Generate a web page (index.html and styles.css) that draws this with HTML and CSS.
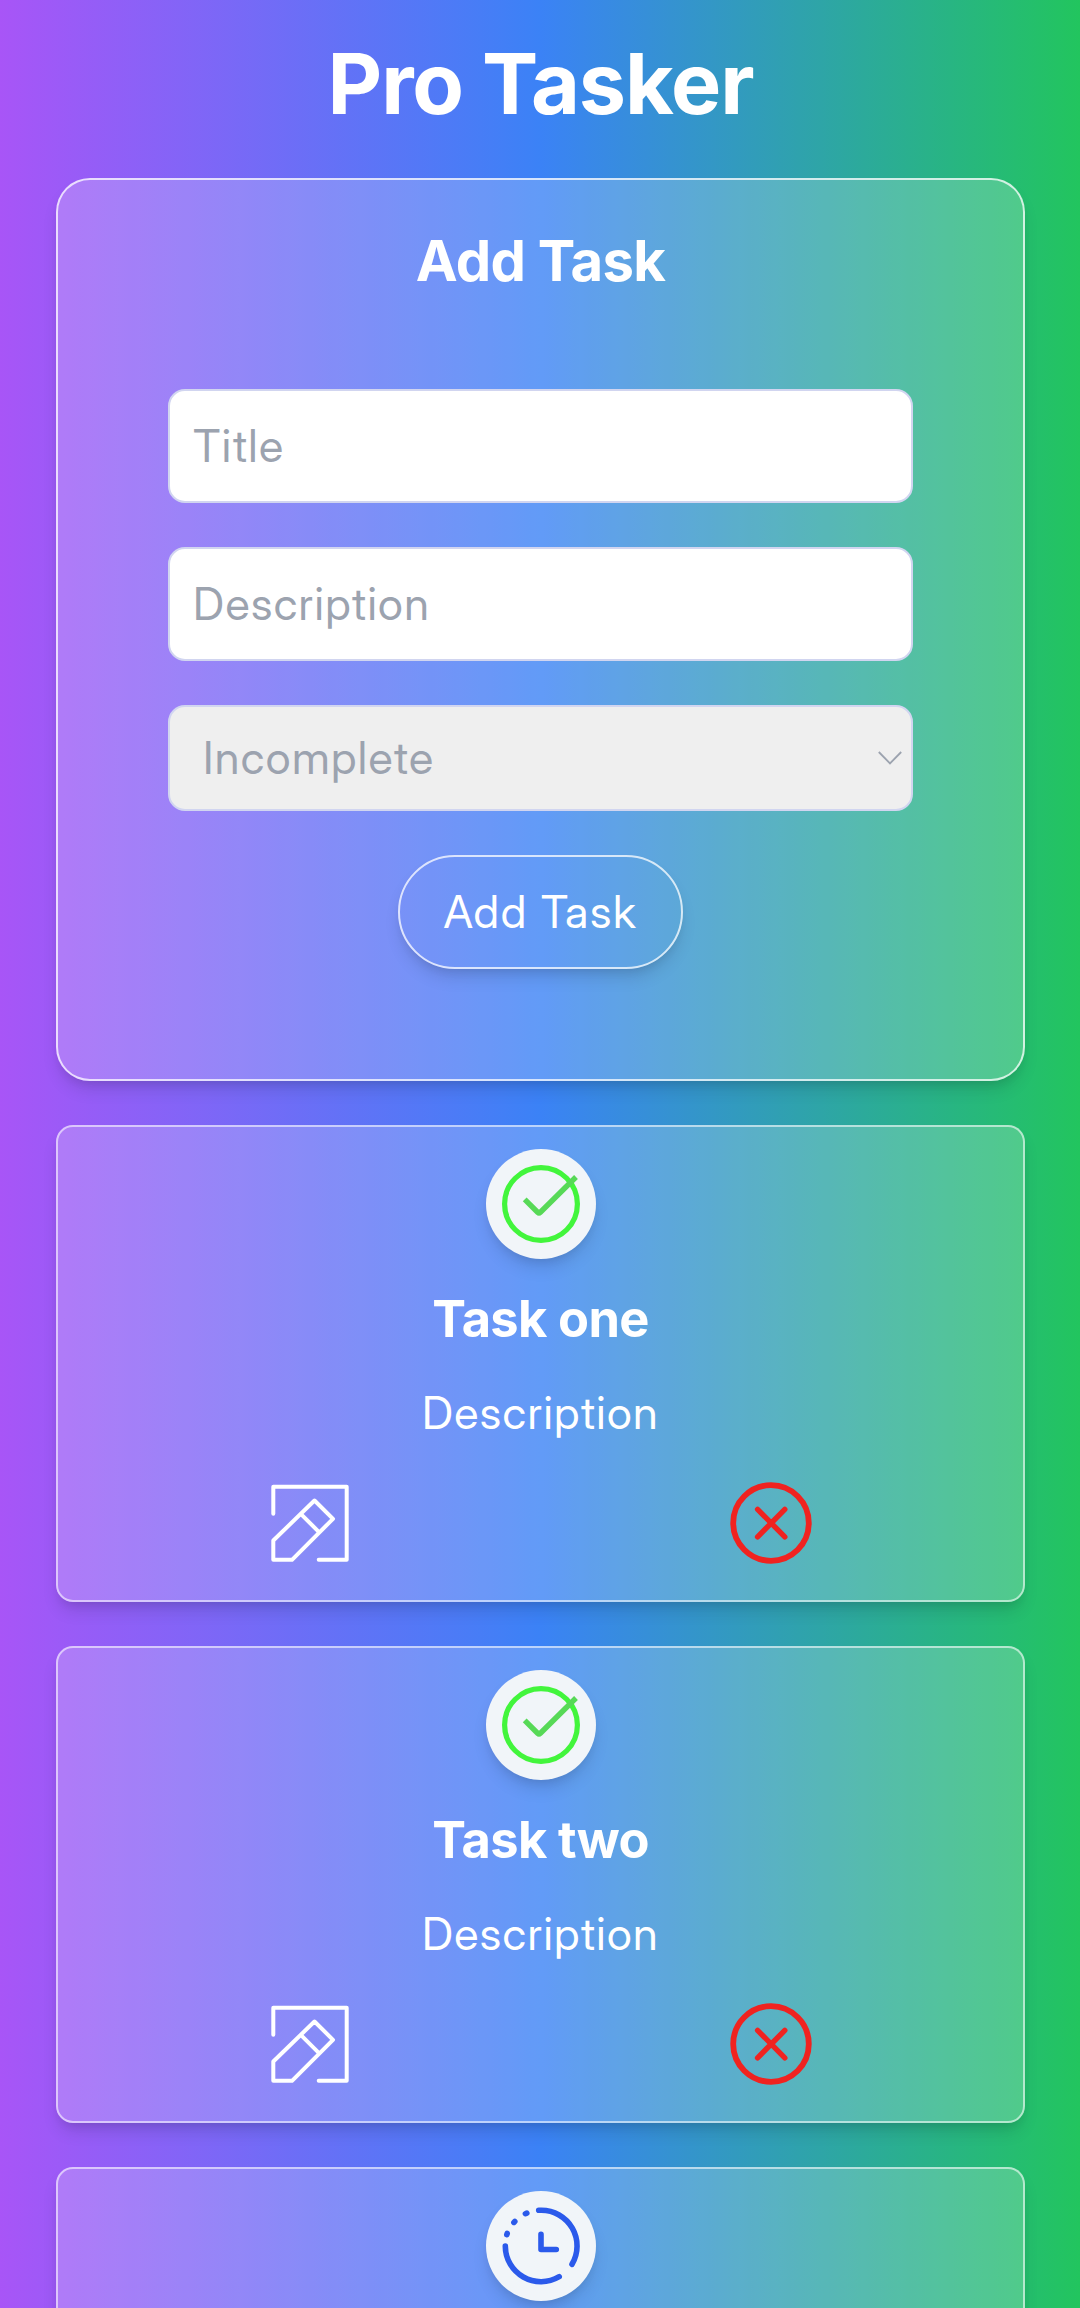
FILE: index.html
```
<!DOCTYPE html>
<html lang="en">
<head>
<meta charset="utf-8">
<title>Pro Tasker</title>
<link rel="stylesheet" href="styles.css">
</head>
<body>
<svg class="sprite" aria-hidden="true">
  <symbol id="done" viewBox="0 0 110 110">
    <circle cx="55" cy="55" r="36.4" stroke="#42f53c" stroke-width="5.2"/>
    <path d="M38.7 50.4 L51.6 63.2 Q53 64.5 54.4 63.2 L90 28" stroke="#57d957" stroke-width="5.4"/>
  </symbol>
  <symbol id="pending" viewBox="0 0 110 110">
    <g stroke="#2b5aeb" stroke-width="5.6" stroke-linecap="round">
      <path d="M52.7 19.3H55A35.7 35.7 0 0 1 86 73.3"/>
      <path d="M19.3 55A35.7 35.7 0 0 0 73.2 85.7"/>
      <path d="M39.4 22.7L40.8 22.1M27.9 31.4L28.8 30.5M20.8 43.7L21.2 42.5"/>
      <path d="M55 43.4V58.5H70.3" stroke-linejoin="round"/>
    </g>
  </symbol>
  <symbol id="edit" viewBox="0 0 84 84">
    <g stroke="#fff" stroke-width="4" stroke-linecap="round" stroke-linejoin="round">
      <path d="M5.3 32.8V5.8H78.7V78.8H50.7"/>
      <path d="M5.3 78.8V59.5L46.5 19.5L65 37.8L24 78.8ZM33 33.2L50.8 50.8"/>
    </g>
  </symbol>
  <symbol id="remove" viewBox="0 0 84 84">
    <g stroke="#f02320" stroke-linecap="round">
      <circle cx="42" cy="42" r="37.8" stroke-width="5.8"/>
      <path d="M28.6 28.3L55.8 55.9M55.8 28.3L28.6 55.9" stroke-width="5.4"/>
    </g>
  </symbol>
</svg>
<main class="page">
  <h1 class="page-title">Pro Tasker</h1>
  <form class="panel add-form">
    <h2 class="form-title">Add Task</h2>
    <input class="field" type="text" placeholder="Title">
    <input class="field" type="text" placeholder="Description">
    <div class="select-wrap">
      <select class="field select"><option>Incomplete</option></select>
      <svg class="chevron" viewBox="0 0 24 14"><path d="M.8 1L12 12.4L23.2 1"/></svg>
    </div>
    <button class="submit" type="button">Add Task</button>
  </form>
  <article class="panel task">
    <span class="badge"><svg><use href="#done"/></svg></span>
    <h3 class="task-title">Task one</h3>
    <p class="task-text">Description</p>
    <div class="actions"><svg><use href="#edit"/></svg><svg><use href="#remove"/></svg></div>
  </article>
  <article class="panel task">
    <span class="badge"><svg><use href="#done"/></svg></span>
    <h3 class="task-title">Task two</h3>
    <p class="task-text">Description</p>
    <div class="actions"><svg><use href="#edit"/></svg><svg><use href="#remove"/></svg></div>
  </article>
  <article class="panel task">
    <span class="badge"><svg><use href="#pending"/></svg></span>
  </article>
</main>
</body>
</html>
```
FILE: styles.css
```
* { box-sizing: border-box; margin: 0; }
html { height: 100%; }
body {
  height: 100%;
  overflow: hidden;
  font: 400 45px/67.5px "Inter Display", Inter, sans-serif;
  letter-spacing: .031em;
  color: #fff;
  background: linear-gradient(to right, #a855f7, #3b82f6, #22c55e);
}
h1, h2, h3 { font-family: Inter, sans-serif; letter-spacing: -.013em; }
input, select { letter-spacing: .031em; }
svg { fill: none; }
.sprite { display: none; }
.page {
  display: flex;
  flex-direction: column;
  padding: 33px 55px 0 56px;
}
.page-title {
  margin-bottom: 44px;
  text-align: center;
  font-size: 84.4px;
  line-height: 101px;
}
.panel {
  display: flex;
  flex-direction: column;
  align-items: center;
  flex-shrink: 0;
  margin-bottom: 44px;
  border: 2px solid rgba(255, 255, 255, .57);
  border-radius: 17px;
  background: rgba(255, 255, 255, .2);
  box-shadow: 0 11px 17px -3px rgba(0, 0, 0, .12), 0 6px 11px -6px rgba(0, 0, 0, .12);
}
.add-form {
  height: 903px;
  padding-top: 42px;
  border-color: rgba(255, 255, 255, .74);
  border-radius: 34px;
}
.form-title {
  margin-bottom: 88px;
  font-size: 56.25px;
  line-height: 79px;
}
.field {
  display: block;
  width: 745px;
  height: 114px;
  margin-bottom: 44px;
  padding: 0 22px 1px 23px;
  border: 2px solid #d1d5f0;
  border-radius: 17px;
  background: #fff;
  color: #9ca3af;
  font: inherit;
}
.field::placeholder { color: #9ca3af; opacity: 1; }
.select-wrap { display: grid; margin-bottom: 44px; }
.select-wrap > * { grid-area: 1 / 1; }
.select {
  height: 106px;
  margin: 0;
  padding: 0 33px;
  background: #efefef;
  appearance: none;
  opacity: 1;
}
.chevron {
  width: 24px;
  height: 14px;
  margin-right: 11px;
  place-self: center end;
  stroke: #9ca3af;
  stroke-width: 1.8;
  pointer-events: none;
}
.submit {
  width: 285px;
  height: 114px;
  padding: 0;
  border: 2px solid rgba(255, 255, 255, .75);
  border-radius: 57px;
  background: transparent;
  color: #fff;
  font: inherit;
  letter-spacing: .038em;
  box-shadow: 0 11px 17px -3px rgba(0, 0, 0, .12), 0 6px 11px -6px rgba(0, 0, 0, .12);
}
.task { height: 477px; padding-top: 22px; }
.badge {
  width: 110px;
  height: 110px;
  margin-bottom: 20px;
  border-radius: 50%;
  background: #f1f5f9;
  box-shadow: 0 11px 17px -3px rgba(0, 0, 0, .12), 0 6px 11px -6px rgba(0, 0, 0, .12);
}
.badge svg { display: block; width: 110px; height: 110px; }
.task-title {
  margin-bottom: 21px;
  font-size: 50.6px;
  line-height: 79px;
}
.task-text { margin-bottom: 34px; }
.actions {
  display: flex;
  justify-content: space-between;
  width: 545px;
}
.actions svg { width: 84px; height: 84px; }
```
